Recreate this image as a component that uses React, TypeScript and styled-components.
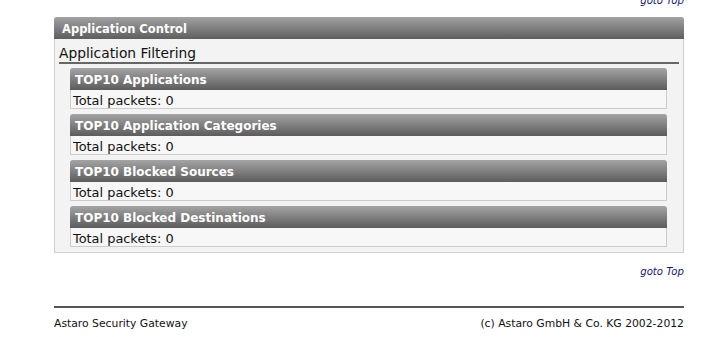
import React from 'react';
import styled, { createGlobalStyle } from 'styled-components';

const GlobalStyle = createGlobalStyle`
  body {
    margin: 0;
    background: #ffffff;
    font-family: "DejaVu Sans", Verdana, sans-serif;
  }
`;

// styles
const StyledPage = styled.div`
  width: 630px;
  margin-left: 54px;
`;

const StyledGotoTop = styled.a<{ $top?: boolean }>`
  display: block;
  text-align: right;
  font-size: 10.2px;
  line-height: 12px;
  font-style: italic;
  color: #1a1a6e;
  text-decoration: none;
  margin-top: ${(props) => (props.$top ? '-5px' : '13px')};
`;

const StyledPanel = styled.div`
  margin-top: 10px;
  background: #f3f3f3;
  border: 1px solid #cfcfcf;
  border-top: none;
  border-radius: 3px 3px 0 0;
  padding-bottom: 5px;
`;

const StyledPanelHeader = styled.div`
  height: 21px;
  margin: 0 -1px;
  padding: 1px 0 0 8px;
  border-radius: 3px 3px 0 0;
  background: linear-gradient(to bottom, #a2a2a2, #5e5e5e);
  color: #ffffff;
  font-weight: bold;
  font-size: 11.5px;
  line-height: 22px;
`;

const StyledSectionTitle = styled.div`
  margin: 5px 4px 0 4px;
  padding-top: 1px;
  font-size: 13.8px;
  line-height: 17px;
  color: #111111;
  border-bottom: 2px solid #666666;
`;

const StyledBlocks = styled.div`
  display: flex;
  flex-direction: column;
  gap: 5px;
  margin: 4px 16px 0 15px;
`;

const StyledBlockHeader = styled.div`
  height: 22px;
  padding-left: 5px;
  border-radius: 3px 3px 0 0;
  background: linear-gradient(to bottom, #a4a4a4, #5c5c5c);
  color: #ffffff;
  font-weight: bold;
  font-size: 12px;
  line-height: 24px;
`;

const StyledBlockBody = styled.div`
  height: 18px;
  padding-left: 2px;
  background: #f7f7f7;
  border: 1px solid #cccccc;
  border-top: none;
  font-size: 12.9px;
  line-height: 21px;
  color: #111111;
  overflow: hidden;
`;

const StyledFooter = styled.div`
  margin-top: 28px;
  border-top: 2px solid #555555;
  display: flex;
  justify-content: space-between;
  padding-top: 9px;
  font-size: 10.8px;
  color: #111111;
`;

const blocks = [
    'TOP10 Applications',
    'TOP10 Application Categories',
    'TOP10 Blocked Sources',
    'TOP10 Blocked Destinations',
];

const App: React.FC = () => (
    <StyledPage>
        <GlobalStyle />
        <StyledGotoTop $top href="#">goto Top</StyledGotoTop>
        <StyledPanel>
            <StyledPanelHeader>Application Control</StyledPanelHeader>
            <StyledSectionTitle>Application Filtering</StyledSectionTitle>
            <StyledBlocks>
                {blocks.map((title) => (
                    <div key={title}>
                        <StyledBlockHeader>{title}</StyledBlockHeader>
                        <StyledBlockBody>Total packets: 0</StyledBlockBody>
                    </div>
                ))}
            </StyledBlocks>
        </StyledPanel>
        <StyledGotoTop href="#">goto Top</StyledGotoTop>
        <StyledFooter>
            <span>Astaro Security Gateway</span>
            <span>(c) Astaro GmbH &amp; Co. KG 2002-2012</span>
        </StyledFooter>
    </StyledPage>
);

export default App;
